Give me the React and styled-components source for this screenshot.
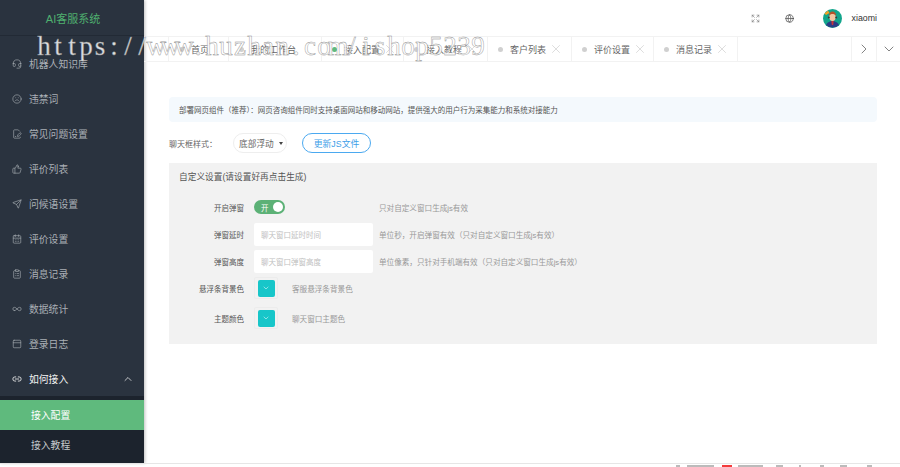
import styled, { createGlobalStyle } from 'styled-components'
import {
  Headset, Frown, FilePenLine, ThumbsUp, Send, CalendarDays, ClipboardList,
  Infinity as InfinityIcon, PanelTop, Link2, ChevronUp, ChevronDown, ChevronRight,
  Expand, Globe, X,
} from 'lucide-react'

const Global = createGlobalStyle`
  html, body { margin: 0; padding: 0; background: #fff; }
  body { font-family: "Liberation Sans", "Noto Sans CJK SC", sans-serif; }
  * { box-sizing: border-box; }
`

const Page = styled.div`
  position: relative;
  width: 900px;
  height: 467px;
  overflow: hidden;
  display: flex;
  flex-direction: column;
`
const Body = styled.div`
  display: flex;
  height: 463px;
`
const Sidebar = styled.aside`
  width: 144px;
  flex-shrink: 0;
  background: #2a333f;
  box-shadow: 1px 0 3px rgba(0, 0, 0, 0.25);
  display: flex;
  flex-direction: column;
  overflow: hidden;
`
const Logo = styled.div`
  height: 36px;
  flex-shrink: 0;
  border-bottom: 1px solid #222a35;
  color: #4fb06f;
  font-size: 11px;
  line-height: 39px;
  text-align: center;
  padding-left: 2px;
  margin-bottom: 10px;
`
const MenuItem = styled.div`
  height: 35px;
  flex-shrink: 0;
  display: flex;
  align-items: center;
  padding-left: 12px;
  gap: 7px;
  font-size: 9.8px;
  color: ${p => (p.$open ? '#f2f2f2' : '#aab0b6')};
  svg { flex-shrink: 0; }
`
const MenuArrow = styled.span`
  margin-left: auto;
  margin-right: 10px;
  display: flex;
`
const SubMenu = styled.div`
  background: #1c232d;
  padding-top: 4px;
  flex: 1;
`
const SubItem = styled.div`
  height: 30px;
  display: flex;
  align-items: center;
  padding-left: 31px;
  font-size: 9.8px;
  color: ${p => (p.$active ? '#fff' : '#c4c8cc')};
  background: ${p => (p.$active ? '#5fba7d' : 'transparent')};
`
const Main = styled.main`
  flex: 1;
  min-width: 0;
  display: flex;
  flex-direction: column;
`
const TopBar = styled.header`
  height: 36px;
  flex-shrink: 0;
  display: flex;
  align-items: center;
  justify-content: flex-end;
  padding-right: 23px;
  color: #666;
`
const TopIcon = styled.span`
  display: flex;
  color: ${p => p.$c};
  margin-right: ${p => p.$gap}px;
`
const UserName = styled.span`
  font-size: 8.8px;
  color: #333;
  margin-left: 10px;
`
const TabBar = styled.nav`
  height: 26px;
  flex-shrink: 0;
  display: flex;
  border-top: 1px solid #f2f2f2;
  border-bottom: 1px solid #f2f2f2;
`
const TabSpacer = styled.div`
  width: ${p => p.$w}px;
  flex-shrink: 0;
  border-right: 1px solid #f2f2f2;
`
const Tab = styled.div`
  width: ${p => p.$w}px;
  flex-shrink: 0;
  display: flex;
  align-items: center;
  padding-left: 10px;
  gap: 7px;
  font-size: 9px;
  color: #666;
  border-right: 1px solid #f2f2f2;
  svg { margin-left: -4px; color: #c4c4c4; flex-shrink: 0; }
`
const Dot = styled.i`
  width: 5px;
  height: 5px;
  border-radius: 50%;
  background: ${p => (p.$active ? '#5fba7d' : '#d0d0d0')};
`
const TabFill = styled.div`
  flex: 1;
  border-right: 1px solid #f2f2f2;
`
const TabButton = styled.div`
  width: ${p => p.$w}px;
  flex-shrink: 0;
  display: flex;
  align-items: center;
  justify-content: center;
  color: #555;
  border-right: ${p => (p.$last ? 'none' : '1px solid #f2f2f2')};
`
const Content = styled.section`
  padding: 35px 23px 0 25px;
`
const Notice = styled.div`
  height: 25px;
  background: #f4f9fd;
  border-radius: 4px;
  padding: 0 0 1px 10px;
  display: flex;
  align-items: center;
  font-size: 7.5px;
  color: #555;
`
const StyleRow = styled.div`
  height: 20px;
  margin: 11px 0 10px;
  display: flex;
  align-items: center;
`
const StyleLabel = styled.span`
  width: 64px;
  font-size: 8px;
  color: #666;
`
const SelectBox = styled.div`
  width: 54px;
  height: 20px;
  border: 1px solid #eee;
  border-radius: 10px;
  display: flex;
  align-items: center;
  padding-left: 5px;
  font-size: 8.7px;
  color: #666;
  &::after {
    content: '';
    margin-left: 5px;
    border: 2px solid transparent;
    border-top: 3px solid #444;
    border-bottom: 0;
  }
`
const OutlineButton = styled.div`
  width: 69px;
  height: 20px;
  margin-left: 15px;
  border: 1px solid #4ba9f0;
  border-radius: 10px;
  display: flex;
  align-items: center;
  justify-content: center;
  font-size: 8.8px;
  color: #3d9ee8;
`
const Panel = styled.div`
  height: 181px;
  background: #f2f2f2;
  padding: 8px 0 0 10px;
`
const PanelTitle = styled.div`
  height: 13px;
  line-height: 13px;
  font-size: 8.7px;
  color: #555;
  margin-bottom: 16px;
`
const FormRow = styled.div`
  display: flex;
  align-items: center;
  height: ${p => p.$h}px;
  margin-bottom: ${p => p.$mb || 0}px;
`
const RowLabel = styled.span`
  width: 65px;
  margin-right: 10px;
  text-align: right;
  font-size: 7.5px;
  color: #555;
  white-space: nowrap;
`
const Toggle = styled.div`
  width: 31px;
  height: 14px;
  border-radius: 7px;
  background: #5cb176;
  color: #fff;
  font-size: 7.5px;
  display: flex;
  align-items: center;
  justify-content: space-between;
  padding: 0 2px 0 7px;
  &::after {
    content: '';
    width: 10px;
    height: 10px;
    border-radius: 50%;
    background: #fff;
  }
`
const TextInput = styled.div`
  width: 119px;
  height: 23px;
  background: #fff;
  border-radius: 2px;
  display: flex;
  align-items: center;
  padding-left: 7px;
  font-size: 7.5px;
  color: #c0c0c0;
`
const Hint = styled.span`
  font-size: 7.6px;
  color: #999;
  margin-left: ${p => p.$ml}px;
  white-space: nowrap;
`
const ColorBox = styled.div`
  width: 24px;
  height: 22px;
  border: 1px solid #ececec;
  border-radius: 2px;
  display: flex;
  align-items: center;
  justify-content: center;
`
const Swatch = styled.div`
  width: 17px;
  height: 17px;
  border-radius: 2px;
  background: #17c6c9;
  color: #fff;
  display: flex;
  align-items: center;
  justify-content: center;
`
const Footer = styled.footer`
  height: 4px;
  border-top: 1px solid #e6e6e6;
  padding: 1px 0 0 676px;
  display: flex;
`
const FootMark = styled.i`
  height: 3px;
  width: ${p => p.$w}px;
  margin-right: ${p => p.$mr}px;
  background: ${p => p.$c || '#bbb'};
`
// the site's watermark is a fixed-pitch serif, so each letter sits in its own cell
const Watermark = styled.div`
  position: absolute;
  left: 37px;
  top: 28px;
  display: flex;
  font-family: "Liberation Serif", serif;
  font-size: 27px;
  line-height: 36px;
  white-space: nowrap;
  color: rgba(255, 255, 255, 0.85);
  -webkit-text-stroke: 0.4px #8a8a8a;
  pointer-events: none;
`
const WaterChar = styled.span`
  width: 14px;
  display: flex;
  justify-content: center;
`

const menu = [
  [Headset, '机器人知识库'],
  [Frown, '违禁词'],
  [FilePenLine, '常见问题设置'],
  [ThumbsUp, '评价列表'],
  [Send, '问候语设置'],
  [CalendarDays, '评价设置'],
  [ClipboardList, '消息记录'],
  [InfinityIcon, '数据统计'],
  [PanelTop, '登录日志'],
]

const tabs = [
  { label: '首页', w: 60 },
  { label: '我的工作台', w: 93 },
  { label: '接入配置', w: 82, active: true },
  { label: '接入教程', w: 84 },
  { label: '客户列表', w: 84 },
  { label: '评价设置', w: 82 },
  { label: '消息记录', w: 84 },
]

const footMarks = [[4, 7], [27, 8], [10, 6, '#f33c3c'], [25, 13], [7, 16], [2, 19], [4, 16], [7, 20], [5, 0]]

function Avatar() {
  return (
    <svg width="19" height="19" viewBox="0 0 19 19">
      <circle cx="9.5" cy="9.5" r="9.5" fill="#12a58c" />
      <path d="M3 16c1.500-3 4-4 6.500-4s5 1 6.500 4a9.500 9.500 0 0 1-13 0z" fill="#2b3c86" />
      <path d="M8.300 12h2.400l-.5 4h-1.400z" fill="#c8343a" />
      <ellipse cx="9.500" cy="8" rx="3.200" ry="4" fill="#f3c6a0" />
      <path d="M5.800 7c0-3 1.700-4.500 3.700-4.500S13.200 4 13.200 7c-1-1.500-2.500-2-3.700-2s-2.700.5-3.700 2z" fill="#b5532a" />
      <path d="M1.500 4.500 5 1.500l1.500 2.500L3 6z" fill="#f4a024" />
      <circle cx="5.800" cy="8.500" r="1" fill="#3a3a3a" />
      <circle cx="13.200" cy="8.500" r="1" fill="#3a3a3a" />
    </svg>
  )
}

export default function App() {
  return (
    <Page>
      <Global />
      <Body>
        <Sidebar>
          <Logo>AI客服系统</Logo>
          {menu.map(([Icon, label]) => (
            <MenuItem key={label}>
              <Icon size={10} strokeWidth={1.5} />
              {label}
            </MenuItem>
          ))}
          <MenuItem $open>
            <Link2 size={10} strokeWidth={2} />
            如何接入
            <MenuArrow><ChevronUp size={12} strokeWidth={1.5} /></MenuArrow>
          </MenuItem>
          <SubMenu>
            <SubItem $active>接入配置</SubItem>
            <SubItem>接入教程</SubItem>
          </SubMenu>
        </Sidebar>
        <Main>
          <TopBar>
            <TopIcon $gap={25} $c="#777"><Expand size={9} strokeWidth={1.6} /></TopIcon>
            <TopIcon $gap={29} $c="#444"><Globe size={9} strokeWidth={1.8} /></TopIcon>
            <Avatar />
            <UserName>xiaomi</UserName>
          </TopBar>
          <TabBar>
            <TabSpacer $w={25} />
            {tabs.map((t, i) => (
              <Tab key={t.label} $w={t.w}>
                <Dot $active={t.active} />
                {t.label}
                {i > 1 && <X size={14} strokeWidth={1} />}
              </Tab>
            ))}
            <TabFill />
            <TabButton $w={25}><ChevronRight size={16} strokeWidth={1.1} /></TabButton>
            <TabButton $w={23} $last><ChevronDown size={16} strokeWidth={1.1} /></TabButton>
          </TabBar>
          <Content>
            <Notice>部署网页组件（推荐）：网页咨询组件同时支持桌面网站和移动网站，提供强大的用户行为采集能力和系统对接能力</Notice>
            <StyleRow>
              <StyleLabel>聊天框样式：</StyleLabel>
              <SelectBox>底部浮动</SelectBox>
              <OutlineButton>更新JS文件</OutlineButton>
            </StyleRow>
            <Panel>
              <PanelTitle>自定义设置(请设置好再点击生成)</PanelTitle>
              <FormRow $h={14} $mb={9}>
                <RowLabel>开启弹窗</RowLabel>
                <Toggle>开</Toggle>
                <Hint $ml={94}>只对自定义窗口生成js有效</Hint>
              </FormRow>
              <FormRow $h={23} $mb={4}>
                <RowLabel>弹窗延时</RowLabel>
                <TextInput>聊天窗口延时时间</TextInput>
                <Hint $ml={6}>单位秒，开启弹窗有效（只对自定义窗口生成js有效）</Hint>
              </FormRow>
              <FormRow $h={23} $mb={4}>
                <RowLabel>弹窗高度</RowLabel>
                <TextInput>聊天窗口弹窗高度</TextInput>
                <Hint $ml={6}>单位像素，只针对手机端有效（只对自定义窗口生成js有效）</Hint>
              </FormRow>
              <FormRow $h={22} $mb={8}>
                <RowLabel>悬浮条背景色</RowLabel>
                <ColorBox><Swatch><ChevronDown size={8} strokeWidth={1.5} /></Swatch></ColorBox>
                <Hint $ml={14}>客服悬浮条背景色</Hint>
              </FormRow>
              <FormRow $h={22}>
                <RowLabel>主题颜色</RowLabel>
                <ColorBox><Swatch><ChevronDown size={8} strokeWidth={1.5} /></Swatch></ColorBox>
                <Hint $ml={14}>聊天窗口主题色</Hint>
              </FormRow>
            </Panel>
          </Content>
        </Main>
      </Body>
      <Footer>
        {footMarks.map(([w, mr, c], i) => <FootMark key={i} $w={w} $mr={mr} $c={c} />)}
      </Footer>
      <Watermark aria-label="https://www.huzhan.com/ishop5239">
        {'https://www.huzhan.com/ishop5239'.split('').map((ch, i) => <WaterChar key={i}>{ch}</WaterChar>)}
      </Watermark>
    </Page>
  )
}
